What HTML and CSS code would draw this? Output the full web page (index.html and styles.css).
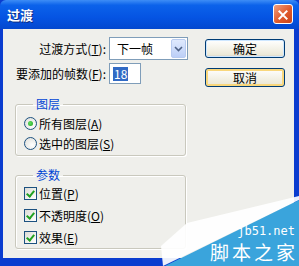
FILE: index.html
```html
<!DOCTYPE html>
<html lang="zh-CN">
  <head>
    <meta charset="utf-8" />
    <meta name="viewport" content="width=device-width, initial-scale=1" />
    <title>过渡</title>
    <link rel="stylesheet" href="styles.css">
  </head>
  <body>
    <div class="window">
      <!-- title bar -->
      <div class="titlebar">
        <span class="title">过渡</span>
        <span class="close">
          <svg width="20" height="20" viewBox="0 0 20 20">
            <path d="M6 6 L14 14 M14 6 L6 14" stroke="#fff" stroke-width="2.2" stroke-linecap="square" />
          </svg>
        </span>
      </div>

      <div class="body">
        <div class="fields">
          <div class="form-grid">
            <label>过渡方式(<u>T</u>):</label>
            <div class="select">
              <span>下一帧</span>
              <span class="arrow">
                <svg width="9" height="6" viewBox="0 0 9 6">
                  <path d="M1 1 L4.5 4.5 L8 1" stroke="#4d6185" stroke-width="1.6" fill="none" />
                </svg>
              </span>
            </div>
            <label>要添加的帧数(<u>F</u>):</label>
            <div class="input"><span class="selected">18</span></div>
          </div>

          <fieldset class="group layers">
            <legend>图层</legend>
            <div class="option"><span class="radio checked"></span>所有图层(<u>A</u>)</div>
            <div class="option"><span class="radio"></span>选中的图层(<u>S</u>)</div>
          </fieldset>

          <fieldset class="group params">
            <legend>参数</legend>
            <div class="option check-row"><span class="check"></span>位置(<u>P</u>)</div>
            <div class="option check-row"><span class="check"></span>不透明度(<u>O</u>)</div>
            <div class="option check-row"><span class="check"></span>效果(<u>E</u>)</div>
          </fieldset>
        </div>

        <div class="buttons">
          <button class="btn">确定</button>
          <button class="btn focus">取消</button>
        </div>
      </div>
    </div>

    <!-- site watermark over the corner -->
    <div class="watermark">
      <svg width="140" height="72" viewBox="0 0 140 72">
        <polygon points="28,29 140,2 140,6 4,72 2,52" fill="#ffffff" opacity="0.92" />
        <polygon points="6,72 140,6 140,72" fill="#3aa4dc" />
      </svg>
      <span class="wm-url">jb51.net</span>
      <span class="wm-name">脚本之家</span>
    </div>
  </body>
</html>
```

FILE: styles.css
```css
body {
  margin: 0;
  font-family: "Noto Sans CJK SC", "Liberation Sans", sans-serif;
  font-size: 12px;
  color: #000;
}

.window {
  width: 299px;
  height: 266px;
  box-sizing: border-box;
  background: #0a3ccf;
  padding: 0 5px 8px 3px;
  display: flex;
  flex-direction: column;
}

.titlebar {
  height: 29px;
  margin: 0 -5px 0 -3px;
  padding: 0 6px 0 7px;
  display: flex;
  align-items: center;
  justify-content: space-between;
  background: linear-gradient(#3d8df6, #0b62ea 18%, #0554e3 60%, #0348cf);
  border-radius: 6px 6px 0 0;
}

.title {
  color: #fff;
  font-size: 13px;
  font-weight: bold;
  text-shadow: 1px 1px 0 #0a2a80;
  line-height: 16px;
}

.close {
  width: 20px;
  height: 20px;
  box-sizing: border-box;
  border: 1px solid #fff;
  border-radius: 3px;
  background: linear-gradient(135deg, #f0a080, #e05a2c 55%, #c8441a);
  display: flex;
  margin-top: -2px;
}

.body {
  flex: 1;
  background: #efefeb;
  display: flex;
  padding: 8px 0 0 9px;
}

.fields {
  width: 176px;
}

.form-grid {
  display: grid;
  grid-template-columns: 94px auto;
  column-gap: 3px;
  row-gap: 3px;
  align-items: center;
}

.form-grid label {
  text-align: right;
  white-space: nowrap;
}

.select {
  width: 79px;
  height: 23px;
  box-sizing: border-box;
  border: 1px solid #7f9db9;
  background: #fff;
  display: flex;
  align-items: center;
  justify-content: space-between;
  padding: 0 1px 0 7px;
}

.arrow {
  width: 15px;
  height: 19px;
  box-sizing: border-box;
  border: 1px solid #b8cbf0;
  border-radius: 2px;
  background: linear-gradient(#dfe9fd, #bccff7);
  display: flex;
  align-items: center;
  justify-content: center;
}

.input {
  width: 32px;
  height: 21px;
  box-sizing: border-box;
  border: 1px solid #7f9db9;
  background: #fff;
  display: flex;
  align-items: center;
  padding-left: 3px;
}

.selected {
  background: #316ac5;
  color: #fff;
  line-height: 14px;
  padding: 0 1px;
}

.group {
  margin: 13px 0 0 3px;
  width: 171px;
  min-width: 0;
  box-sizing: border-box;
  padding: 2px 0 2px 8px;
  border: 1px solid #c9c8bd;
  border-radius: 3px;
  box-shadow: inset 1px 1px 0 #fff, 1px 1px 0 #fff;
}

.group legend {
  padding: 0 3px;
  margin-left: 9px;
  line-height: 14px;
  color: #0046d5;
}

.params {
  margin-top: 12px;
  padding-top: 0;
  padding-bottom: 0;
}

.option {
  height: 20px;
  display: flex;
  align-items: center;
  white-space: nowrap;
}

.params .check-row {
  height: 22px;
}

.radio {
  width: 13px;
  height: 13px;
  box-sizing: border-box;
  border: 1px solid #1c5180;
  border-radius: 50%;
  background: radial-gradient(circle at 65% 65%, #fff, #dcdcd6);
  margin-right: 2px;
  display: flex;
  align-items: center;
  justify-content: center;
}

.radio.checked::after {
  content: "";
  width: 5px;
  height: 5px;
  border-radius: 50%;
  background: radial-gradient(circle at 40% 40%, #5fe05f, #21a121);
}

.check {
  width: 13px;
  height: 13px;
  box-sizing: border-box;
  border: 1px solid #1c5180;
  background: linear-gradient(135deg, #dcdcd6, #fff);
  margin-right: 2px;
  position: relative;
}

.check::after {
  content: "";
  position: absolute;
  left: 3px;
  top: 1px;
  width: 3px;
  height: 6px;
  border: solid #21a121;
  border-width: 0 2px 2px 0;
  transform: rotate(40deg);
}

.buttons {
  margin-left: 17px;
  padding-top: 2px;
  display: flex;
  flex-direction: column;
  gap: 10px;
}

.btn {
  width: 80px;
  height: 19px;
  box-sizing: border-box;
  font-family: inherit;
  font-size: 12px;
  line-height: 14px;
  padding: 0;
  border: 1px solid #003c74;
  border-radius: 3px;
  background: linear-gradient(#fff, #ece9d8 85%, #d6d0c5);
  box-shadow: inset 0 0 0 1px #cee7ff;
  color: #000;
}

.btn.focus {
  box-shadow: inset 0 0 0 2px #f9d77c;
}

.watermark {
  position: absolute;
  right: 0;
  bottom: 0;
  width: 140px;
  height: 72px;
}

.watermark svg {
  display: block;
}

.wm-url {
  position: absolute;
  right: 4px;
  bottom: 29px;
  color: #fff;
  font-family: "DejaVu Sans Mono", monospace;
  font-size: 12px;
  line-height: 12px;
}

.wm-name {
  position: absolute;
  right: 1px;
  bottom: 5px;
  color: #fff;
  font-size: 19px;
  line-height: 19px;
  letter-spacing: 3px;
}
```
